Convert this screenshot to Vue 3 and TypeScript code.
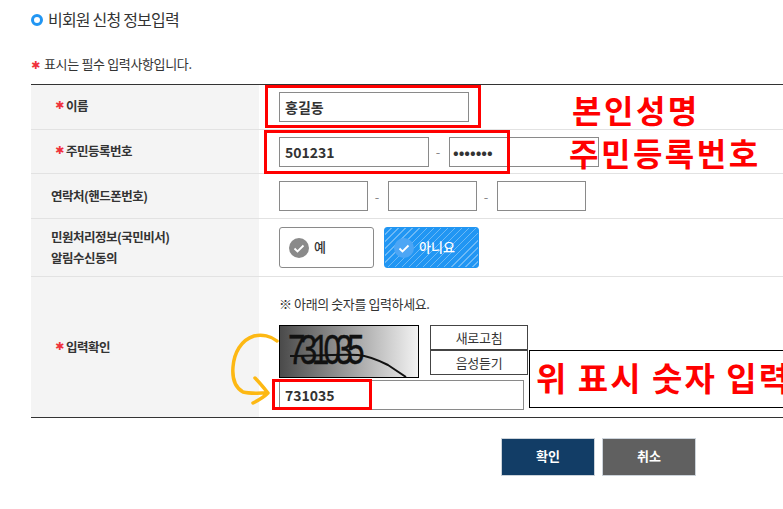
<template>
  <div class="page">
    <h2 class="title"><span class="ring"></span>비회원 신청 정보입력</h2>
    <p class="note"><span class="star">✱</span>표시는 필수 입력사항입니다.</p>

    <div class="form">
      <div class="row row-1">
        <div class="label"><span class="star">✱</span>이름</div>
        <div class="field"><input v-model="name" class="input w190" type="text" /></div>
      </div>
      <div class="row row-2">
        <div class="label"><span class="star">✱</span>주민등록번호</div>
        <div class="field">
          <input v-model="rrnFront" class="input w150" type="text" />
          <span class="dash">-</span>
          <input v-model="rrnBack" class="input w150 secret" type="password" />
        </div>
      </div>
      <div class="row row-3">
        <div class="label plain">연락처(핸드폰번호)</div>
        <div class="field">
          <input class="input w89" type="text" />
          <span class="dash">-</span>
          <input class="input w89" type="text" />
          <span class="dash">-</span>
          <input class="input w89" type="text" />
        </div>
      </div>
      <div class="row row-4">
        <div class="label plain two-line">민원처리정보(국민비서)<br />알림수신동의</div>
        <div class="field choices">
          <button class="choice" type="button">
            <svg class="check" viewBox="0 0 20 20"><circle cx="10" cy="10" r="10" fill="#8a8a8a" /><path d="M5.5 10.5l3 3 6-6" fill="none" stroke="#fff" stroke-width="1.8" /></svg>
            <span>예</span>
          </button>
          <button class="choice on" type="button">
            <svg class="check" viewBox="0 0 20 20"><circle cx="10" cy="10" r="10" fill="#4da6f5" /><path d="M5.5 10.5l3 3 6-6" fill="none" stroke="#fff" stroke-width="1.8" /></svg>
            <span>아니요</span>
          </button>
        </div>
      </div>
      <div class="row row-5">
        <div class="label low"><span class="star">✱</span>입력확인</div>
        <div class="captcha-cell">
          <p class="hint">※ 아래의 숫자를 입력하세요.</p>
          <div class="captcha-top">
            <div class="captcha">
              <span class="captcha-text">731035</span>
              <svg class="captcha-line" viewBox="0 0 138 51"><path d="M10 30C40 30 60 28 78 29C90 30 100 35 108 39L126 51" fill="none" stroke="#111" stroke-width="2" /></svg>
            </div>
            <div class="captcha-btns">
              <button class="small-btn" type="button">새로고침</button>
              <button class="small-btn" type="button">음성듣기</button>
            </div>
          </div>
          <input v-model="code" class="input code" type="text" />
        </div>
      </div>
    </div>

    <div class="actions">
      <button class="btn navy" type="button">확인</button>
      <button class="btn gray" type="button">취소</button>
    </div>

    <!-- 안내용 표시 -->
    <div class="mark mark-name"></div>
    <div class="mark mark-rrn"></div>
    <div class="mark mark-code"></div>
    <div class="memo memo-name">본인성명</div>
    <div class="memo memo-rrn">주민등록번호</div>
    <div class="memo-box">위 표시 숫자 입력</div>
    <svg class="arrow" viewBox="0 0 60 80" width="60" height="80">
      <path d="M49 15C43 10 34 8 26 10C13 14 6 27 5 41C4 53 8 62 15 66C23 68 32 67 40 67M27 52C32 57 36 62 40 67C36 71 31 74 25 77" fill="none" stroke="#fdb813" stroke-width="3.5" stroke-linecap="round" stroke-linejoin="round" />
    </svg>
  </div>
</template>

<script setup lang="ts">
import { ref } from "vue";

const name = ref("홍길동");
const rrnFront = ref("501231");
const rrnBack = ref("1234567");
const code = ref("731035");
</script>

<style>
html,
body {
  margin: 0;
  overflow: hidden;
  background: #fff;
}
</style>

<style scoped>
.page {
  position: relative;
  width: 783px;
  height: 509px;
  overflow: hidden;
  padding: 9px 0 0 31px;
  box-sizing: border-box;
  font-family: "Noto Sans CJK KR", "Noto Sans", sans-serif;
  color: #333;
  background: #fff;
}

.title {
  display: flex;
  align-items: center;
  gap: 5px;
  margin: 0;
  height: 21px;
  font-size: 16px;
  font-weight: 400;
  letter-spacing: -0.8px;
  line-height: 21px;
}

.ring {
  width: 12px;
  height: 12px;
  box-sizing: border-box;
  border: 3px solid #2196f3;
  border-radius: 50%;
}

.note {
  margin: 24px 0 0;
  height: 20px;
  font-size: 13px;
  line-height: 20px;
  letter-spacing: -0.35px;
}

.star {
  display: inline-block;
  width: 11px;
  color: #f0323c;
  font-family: "DejaVu Sans", sans-serif;
  font-weight: 700;
  font-size: 11px;
  letter-spacing: 0;
}

.note .star {
  width: 13px;
}

.form {
  margin-top: 10px;
  width: 752px;
  border-top: 1px solid #333;
  border-bottom: 1px solid #333;
}

.row {
  display: flex;
  border-bottom: 1px solid #e2e2e2;
}

.row:last-child {
  border-bottom: 0;
}

.row-1 { height: 44px; }
.row-2 { height: 43px; }
.row-3 { height: 44px; }
.row-4 { height: 57px; }
.row-5 { height: 140px; }

.label {
  width: 228px;
  flex: none;
  display: flex;
  align-items: center;
  box-sizing: border-box;
  padding: 0 0 3px 24px;
  background: #f4f4f4;
  font-size: 12.5px;
  font-weight: 700;
  letter-spacing: -0.5px;
}

.label.low {
  padding-bottom: 1px;
}

.label.plain {
  padding-left: 20px;
  display: block;
  line-height: 44px;
}

.label.two-line {
  line-height: 21px;
  padding-top: 7px;
}

.field {
  display: flex;
  align-items: center;
  padding-left: 20px;
}

.input {
  height: 30px;
  box-sizing: border-box;
  border: 1px solid #8a8a8a;
  padding: 0 5px;
  font-family: inherit;
  font-size: 14px;
  font-weight: 700;
  color: #333;
  background: #fff;
  outline: none;
}

.w190 { width: 190px; }
.w150 { width: 150px; }
.w89 { width: 89px; }

.secret {
  padding-left: 3px;
  font-size: 15px;
}

.dash {
  width: 20px;
  margin-left: -1px;
  margin-right: 1px;
  text-align: center;
  color: #888;
  font-size: 13px;
}

.choices {
  gap: 10px;
}

.choice {
  display: flex;
  align-items: center;
  gap: 5px;
  width: 95px;
  height: 41px;
  padding: 0 0 0 9px;
  border: 1px solid #8a8a8a;
  border-radius: 3px;
  background: #fff;
  font-family: inherit;
  font-size: 13px;
  font-weight: 500;
  color: #333;
}

.choice span {
  margin-top: -3px;
}

.choice.on {
  border-color: #2196f3;
  color: #fff;
  background: repeating-linear-gradient(135deg, #2196f3 0 4px, #6cb9f6 4px 5px);
}

.check {
  width: 20px;
  height: 20px;
}

.captcha-cell {
  padding: 17px 0 0 20px;
}

.hint {
  margin: 0;
  height: 20px;
  font-size: 13px;
  line-height: 20px;
  letter-spacing: -0.4px;
}

.captcha-top {
  display: flex;
  gap: 11px;
  margin-top: 11px;
}

.captcha {
  position: relative;
  width: 140px;
  height: 53px;
  box-sizing: border-box;
  border: 1px solid #000;
  background: linear-gradient(90deg, #4a4a4a, #f2f2f2);
  overflow: hidden;
}

.captcha-text {
  position: absolute;
  left: 8px;
  top: 4px;
  font-family: "Liberation Sans", sans-serif;
  font-size: 42px;
  line-height: 40px;
  letter-spacing: -7.6px;
  color: #111;
  -webkit-text-stroke: 0.4px #111;
  transform: scaleX(0.75);
  transform-origin: left top;
}

.captcha-line {
  position: absolute;
  left: 0;
  top: 0;
  width: 138px;
  height: 51px;
}

.captcha-btns {
  display: flex;
  flex-direction: column;
}

.small-btn {
  width: 98px;
  height: 25px;
  padding: 0;
  border: 1px solid #444;
  background: #fff;
  font-family: inherit;
  font-size: 13px;
  letter-spacing: -0.3px;
  color: #333;
}

.code {
  display: block;
  width: 245px;
  margin-top: 2px;
}

.actions {
  display: flex;
  gap: 7px;
  margin: 20px 0 0 470px;
}

.btn {
  width: 94px;
  height: 38px;
  padding: 0 0 3px;
  border: 1px solid #ccd3da;
  font-family: inherit;
  font-size: 13px;
  font-weight: 700;
  color: #fff;
}

.navy { background: #123d66; }
.gray { background: #606060; }

.mark {
  position: absolute;
  box-sizing: border-box;
  border: 3px solid #f00;
}

.mark-name { left: 265px; top: 85px; width: 216px; height: 43px; }
.mark-rrn { left: 264px; top: 130px; width: 246px; height: 44px; }
.mark-code { left: 272px; top: 379px; width: 100px; height: 31px; }

.memo {
  position: absolute;
  color: #f00;
  font-size: 32px;
  font-weight: 700;
  line-height: 40px;
  letter-spacing: 2.5px;
  white-space: nowrap;
}

.memo-name { left: 572px; top: 89px; }
.memo-rrn { left: 569px; top: 132px; }

.memo-box {
  position: absolute;
  left: 529px;
  top: 350px;
  width: 300px;
  height: 58px;
  box-sizing: border-box;
  border: 1px solid #000;
  padding-left: 6px;
  background: #fff;
  color: #f00;
  font-size: 33px;
  font-weight: 700;
  line-height: 52px;
  letter-spacing: 2px;
  white-space: nowrap;
}

.arrow {
  position: absolute;
  left: 228px;
  top: 326px;
}
</style>
